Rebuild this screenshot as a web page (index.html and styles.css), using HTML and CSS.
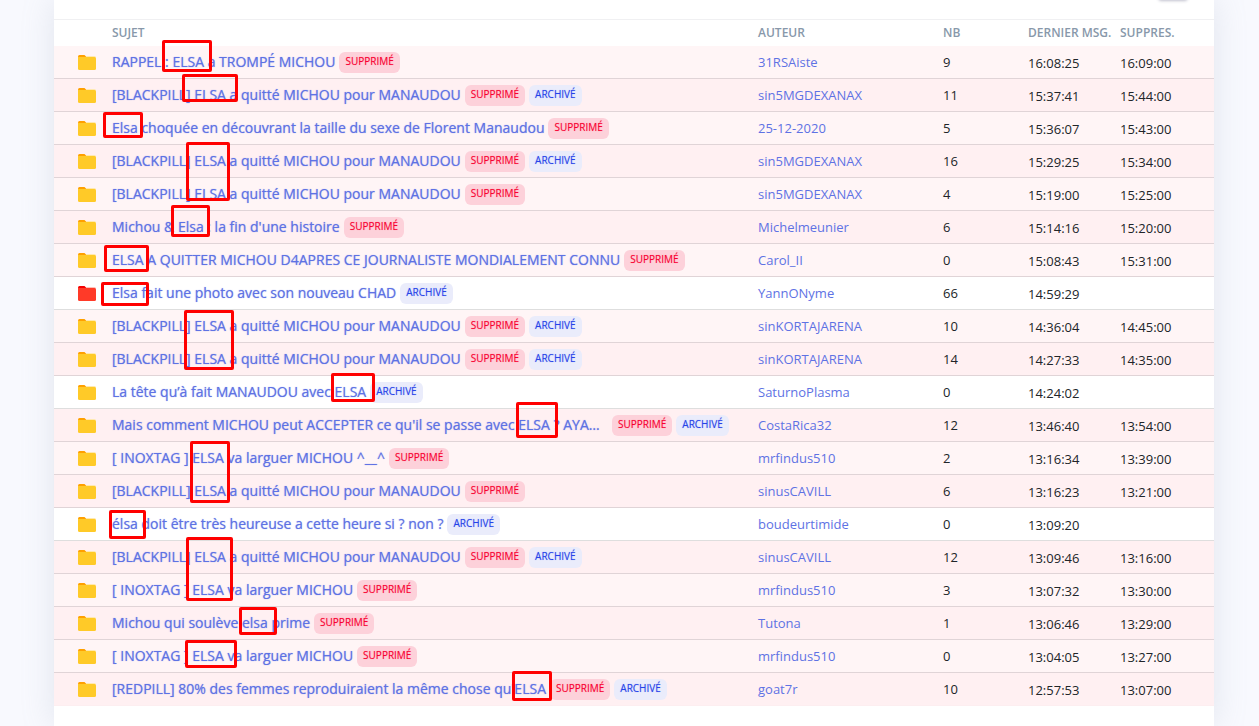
FILE: index.html
```html
<!DOCTYPE html>
<html lang="fr">
<head>
<meta charset="utf-8">
<title>Sujets</title>
<link rel="stylesheet" href="styles.css">
</head>
<body>
<svg class="symbols" aria-hidden="true">
  <symbol id="folder" viewBox="0 0 18 15">
    <path class="folder-tab" d="M1.5 0H6.5L8.5 2V5H0V1.5Q0 0 1.5 0Z"/>
    <path class="folder-paper" d="M8 1H16.5Q18 1 18 2.5V4H8Z"/>
    <path class="folder-front" d="M0 2H16.5Q18 2 18 3.5V13.5Q18 15 16.5 15H1.5Q0 15 0 13.5Z"/>
  </symbol>
</svg>
<main class="card">
  <header class="card-header"><button class="action" type="button" aria-label="Actualiser"></button></header>
  <table class="topics">
    <colgroup><col class="c-icon"><col><col class="c-author"><col class="c-nb"><col class="c-last"><col class="c-del"></colgroup>
    <thead>
      <tr><th></th><th>SUJET</th><th>AUTEUR</th><th>NB</th><th>DERNIER MSG.</th><th>SUPPRES.</th></tr>
    </thead>
    <tbody>
      <tr class="deleted"><td class="icon"><svg class="folder"><use href="#folder"/></svg></td><td><div class="subject"><a class="title" href="#">RAPPEL : ELSA a TROMPÉ MICHOU</a><span class="badge danger">SUPPRIMÉ</span></div></td><td><a href="#">31RSAiste</a></td><td>9</td><td class="time">16:08:25</td><td class="time">16:09:00</td></tr>
      <tr class="deleted"><td class="icon"><svg class="folder"><use href="#folder"/></svg></td><td><div class="subject"><a class="title" href="#">[BLACKPILL] ELSA a quitté MICHOU pour MANAUDOU</a><span class="badge danger">SUPPRIMÉ</span><span class="badge primary">ARCHIVÉ</span></div></td><td><a href="#">sin5MGDEXANAX</a></td><td>11</td><td class="time">15:37:41</td><td class="time">15:44:00</td></tr>
      <tr class="deleted"><td class="icon"><svg class="folder"><use href="#folder"/></svg></td><td><div class="subject"><a class="title" href="#">Elsa choquée en découvrant la taille du sexe de Florent Manaudou</a><span class="badge danger">SUPPRIMÉ</span></div></td><td><a href="#">25-12-2020</a></td><td>5</td><td class="time">15:36:07</td><td class="time">15:43:00</td></tr>
      <tr class="deleted"><td class="icon"><svg class="folder"><use href="#folder"/></svg></td><td><div class="subject"><a class="title" href="#">[BLACKPILL] ELSA a quitté MICHOU pour MANAUDOU</a><span class="badge danger">SUPPRIMÉ</span><span class="badge primary">ARCHIVÉ</span></div></td><td><a href="#">sin5MGDEXANAX</a></td><td>16</td><td class="time">15:29:25</td><td class="time">15:34:00</td></tr>
      <tr class="deleted"><td class="icon"><svg class="folder"><use href="#folder"/></svg></td><td><div class="subject"><a class="title" href="#">[BLACKPILL] ELSA a quitté MICHOU pour MANAUDOU</a><span class="badge danger">SUPPRIMÉ</span></div></td><td><a href="#">sin5MGDEXANAX</a></td><td>4</td><td class="time">15:19:00</td><td class="time">15:25:00</td></tr>
      <tr class="deleted"><td class="icon"><svg class="folder"><use href="#folder"/></svg></td><td><div class="subject"><a class="title" href="#">Michou &amp; Elsa : la fin d'une histoire</a><span class="badge danger">SUPPRIMÉ</span></div></td><td><a href="#">Michelmeunier</a></td><td>6</td><td class="time">15:14:16</td><td class="time">15:20:00</td></tr>
      <tr class="deleted"><td class="icon"><svg class="folder"><use href="#folder"/></svg></td><td><div class="subject"><a class="title" href="#">ELSA A QUITTER MICHOU D4APRES CE JOURNALISTE MONDIALEMENT CONNU</a><span class="badge danger">SUPPRIMÉ</span></div></td><td><a href="#">Carol_II</a></td><td>0</td><td class="time">15:08:43</td><td class="time">15:31:00</td></tr>
      <tr><td class="icon"><svg class="folder hot"><use href="#folder"/></svg></td><td><div class="subject"><a class="title" href="#">Elsa fait une photo avec son nouveau CHAD</a><span class="badge primary">ARCHIVÉ</span></div></td><td><a href="#">YannONyme</a></td><td>66</td><td class="time">14:59:29</td><td class="time"></td></tr>
      <tr class="deleted"><td class="icon"><svg class="folder"><use href="#folder"/></svg></td><td><div class="subject"><a class="title" href="#">[BLACKPILL] ELSA a quitté MICHOU pour MANAUDOU</a><span class="badge danger">SUPPRIMÉ</span><span class="badge primary">ARCHIVÉ</span></div></td><td><a href="#">sinKORTAJARENA</a></td><td>10</td><td class="time">14:36:04</td><td class="time">14:45:00</td></tr>
      <tr class="deleted"><td class="icon"><svg class="folder"><use href="#folder"/></svg></td><td><div class="subject"><a class="title" href="#">[BLACKPILL] ELSA a quitté MICHOU pour MANAUDOU</a><span class="badge danger">SUPPRIMÉ</span><span class="badge primary">ARCHIVÉ</span></div></td><td><a href="#">sinKORTAJARENA</a></td><td>14</td><td class="time">14:27:33</td><td class="time">14:35:00</td></tr>
      <tr><td class="icon"><svg class="folder"><use href="#folder"/></svg></td><td><div class="subject"><a class="title" href="#">La tête qu’à fait MANAUDOU avec ELSA</a><span class="badge primary">ARCHIVÉ</span></div></td><td><a href="#">SaturnoPlasma</a></td><td>0</td><td class="time">14:24:02</td><td class="time"></td></tr>
      <tr class="deleted"><td class="icon"><svg class="folder"><use href="#folder"/></svg></td><td><div class="subject"><a class="title shortened" href="#">Mais comment MICHOU peut ACCEPTER ce qu'il se passe avec ELSA ? AYA…</a><span class="badge danger">SUPPRIMÉ</span><span class="badge primary">ARCHIVÉ</span></div></td><td><a href="#">CostaRica32</a></td><td>12</td><td class="time">13:46:40</td><td class="time">13:54:00</td></tr>
      <tr class="deleted"><td class="icon"><svg class="folder"><use href="#folder"/></svg></td><td><div class="subject"><a class="title" href="#">[ INOXTAG ] ELSA va larguer MICHOU ^__^</a><span class="badge danger">SUPPRIMÉ</span></div></td><td><a href="#">mrfindus510</a></td><td>2</td><td class="time">13:16:34</td><td class="time">13:39:00</td></tr>
      <tr class="deleted"><td class="icon"><svg class="folder"><use href="#folder"/></svg></td><td><div class="subject"><a class="title" href="#">[BLACKPILL] ELSA a quitté MICHOU pour MANAUDOU</a><span class="badge danger">SUPPRIMÉ</span></div></td><td><a href="#">sinusCAVILL</a></td><td>6</td><td class="time">13:16:23</td><td class="time">13:21:00</td></tr>
      <tr><td class="icon"><svg class="folder"><use href="#folder"/></svg></td><td><div class="subject"><a class="title" href="#">élsa doit être très heureuse a cette heure si ? non ?</a><span class="badge primary">ARCHIVÉ</span></div></td><td><a href="#">boudeurtimide</a></td><td>0</td><td class="time">13:09:20</td><td class="time"></td></tr>
      <tr class="deleted"><td class="icon"><svg class="folder"><use href="#folder"/></svg></td><td><div class="subject"><a class="title" href="#">[BLACKPILL] ELSA a quitté MICHOU pour MANAUDOU</a><span class="badge danger">SUPPRIMÉ</span><span class="badge primary">ARCHIVÉ</span></div></td><td><a href="#">sinusCAVILL</a></td><td>12</td><td class="time">13:09:46</td><td class="time">13:16:00</td></tr>
      <tr class="deleted"><td class="icon"><svg class="folder"><use href="#folder"/></svg></td><td><div class="subject"><a class="title" href="#">[ INOXTAG ] ELSA va larguer MICHOU</a><span class="badge danger">SUPPRIMÉ</span></div></td><td><a href="#">mrfindus510</a></td><td>3</td><td class="time">13:07:32</td><td class="time">13:30:00</td></tr>
      <tr class="deleted"><td class="icon"><svg class="folder"><use href="#folder"/></svg></td><td><div class="subject"><a class="title" href="#">Michou qui soulève elsa prime</a><span class="badge danger">SUPPRIMÉ</span></div></td><td><a href="#">Tutona</a></td><td>1</td><td class="time">13:06:46</td><td class="time">13:29:00</td></tr>
      <tr class="deleted"><td class="icon"><svg class="folder"><use href="#folder"/></svg></td><td><div class="subject"><a class="title" href="#">[ INOXTAG ] ELSA va larguer MICHOU</a><span class="badge danger">SUPPRIMÉ</span></div></td><td><a href="#">mrfindus510</a></td><td>0</td><td class="time">13:04:05</td><td class="time">13:27:00</td></tr>
      <tr class="deleted"><td class="icon"><svg class="folder"><use href="#folder"/></svg></td><td><div class="subject"><a class="title" href="#">[REDPILL] 80% des femmes reproduiraient la même chose qu'ELSA</a><span class="badge danger">SUPPRIMÉ</span><span class="badge primary">ARCHIVÉ</span></div></td><td><a href="#">goat7r</a></td><td>10</td><td class="time">12:57:53</td><td class="time">13:07:00</td></tr>
    </tbody>
  </table>
  <div class="marks" aria-hidden="true">
    <i class="mark m1"></i><i class="mark m2"></i><i class="mark m3"></i><i class="mark m4"></i>
    <i class="mark m5"></i><i class="mark m6"></i><i class="mark m7"></i><i class="mark m8"></i>
    <i class="mark m9"></i><i class="mark m10"></i><i class="mark m11"></i><i class="mark m12"></i>
    <i class="mark m13"></i><i class="mark m14"></i><i class="mark m15"></i><i class="mark m16"></i>
  </div>
</main>
</body>
</html>
```

FILE: styles.css
```css
* { box-sizing: border-box; }
html { overflow: hidden; }
body {
  margin: 0;
  min-height: 100vh;
  display: flex;
  padding: 0 45px 0 54px;
  background: #f8f9fe;
  color: #212529;
  font: 13px/20px "Open Sans", sans-serif;
}
.symbols { position: absolute; width: 0; height: 0; }
.card {
  position: relative;
  flex: 1;
  min-width: 0;
  background: #fff;
  box-shadow: 0 0 32px rgba(136, 152, 170, .2);
}
.card-header {
  display: flex;
  justify-content: flex-end;
  align-items: flex-start;
  height: 20px;
  padding-right: 26px;
  border-bottom: 1px solid #f0f0f2;
  overflow: hidden;
}
.action {
  width: 30px;
  height: 30px;
  margin-top: -30px;
  border: 0;
  border-radius: 4px;
  background: #f4f5f7;
  box-shadow: 0 1px 3px rgba(50, 50, 93, .3);
}
.topics {
  width: 100%;
  table-layout: fixed;
  border-collapse: separate;
  border-spacing: 0;
}
.c-icon { width: 58px; }
.c-author { width: 185px; }
.c-nb { width: 85px; }
.c-last { width: 92px; }
.c-del { width: 94px; }
th {
  height: 26px;
  padding: 0;
  color: #8898aa;
  font-size: 12px;
  font-weight: 600;
  text-align: left;
  white-space: nowrap;
}
td {
  height: 33px;
  padding: 0;
  border-bottom: 1px solid #dedede;
  vertical-align: middle;
  white-space: nowrap;
}
.deleted td { background: #fff5f6; border-bottom-color: #e0d4d7; }
.deleted:nth-child(even) td { background: #fff0f2; }
tbody tr:last-child td { border-bottom-color: #fdeef0; }
td.icon { padding-left: 24px; }
td.time { padding-top: 2px; }
a { color: #5e72e4; text-decoration: none; }
.folder { display: block; width: 18px; height: 15px; fill: #ffca28; color: #ffa000; --paper: #ffe9b0; }
.folder.hot { fill: #ff3a28; color: #f40000; --paper: #ffc0b8; }
.folder-tab { fill: currentColor; }
.folder-paper { fill: var(--paper); }
.subject { display: flex; align-items: center; gap: 4px; }
.title {
  font-size: 14px;
  font-weight: 500;
  text-shadow: 0 0 1px rgba(94, 114, 228, .7);
}
.title.shortened { min-width: 496px; }
.badge {
  padding: 3px 6px 6px;
  border-radius: 6px;
  font-size: 10px;
  line-height: 12px;
  font-weight: 500;
}
.danger { background: #fdd1da; color: #f80031; text-shadow: 0 0 1px rgba(248, 0, 49, .4); }
.primary { background: #eaecfb; color: #2643e9; text-shadow: 0 0 1px rgba(38, 67, 233, .4); }

/* Highlight frames drawn over the list */
.mark { position: absolute; border: 3px solid #f00; border-radius: 2px; }
.m1 { left: 108px; top: 40px; width: 50px; height: 32px; }
.m2 { left: 128px; top: 74px; width: 56px; height: 28px; }
.m3 { left: 49px; top: 112px; width: 40px; height: 26px; }
.m4 { left: 132px; top: 142px; width: 44px; height: 59px; }
.m5 { left: 117px; top: 205px; width: 39px; height: 32px; }
.m6 { left: 50px; top: 245px; width: 45px; height: 27px; }
.m7 { left: 47px; top: 282px; width: 48px; height: 24px; }
.m8 { left: 130px; top: 310px; width: 50px; height: 60px; }
.m9 { left: 277px; top: 373px; width: 44px; height: 29px; }
.m10 { left: 462px; top: 402px; width: 42px; height: 36px; }
.m11 { left: 136px; top: 441px; width: 40px; height: 62px; }
.m12 { left: 55px; top: 510px; width: 37px; height: 29px; }
.m13 { left: 132px; top: 537px; width: 47px; height: 64px; }
.m14 { left: 185px; top: 607px; width: 38px; height: 28px; }
.m15 { left: 131px; top: 640px; width: 52px; height: 28px; }
.m16 { left: 458px; top: 671px; width: 40px; height: 30px; }
```
